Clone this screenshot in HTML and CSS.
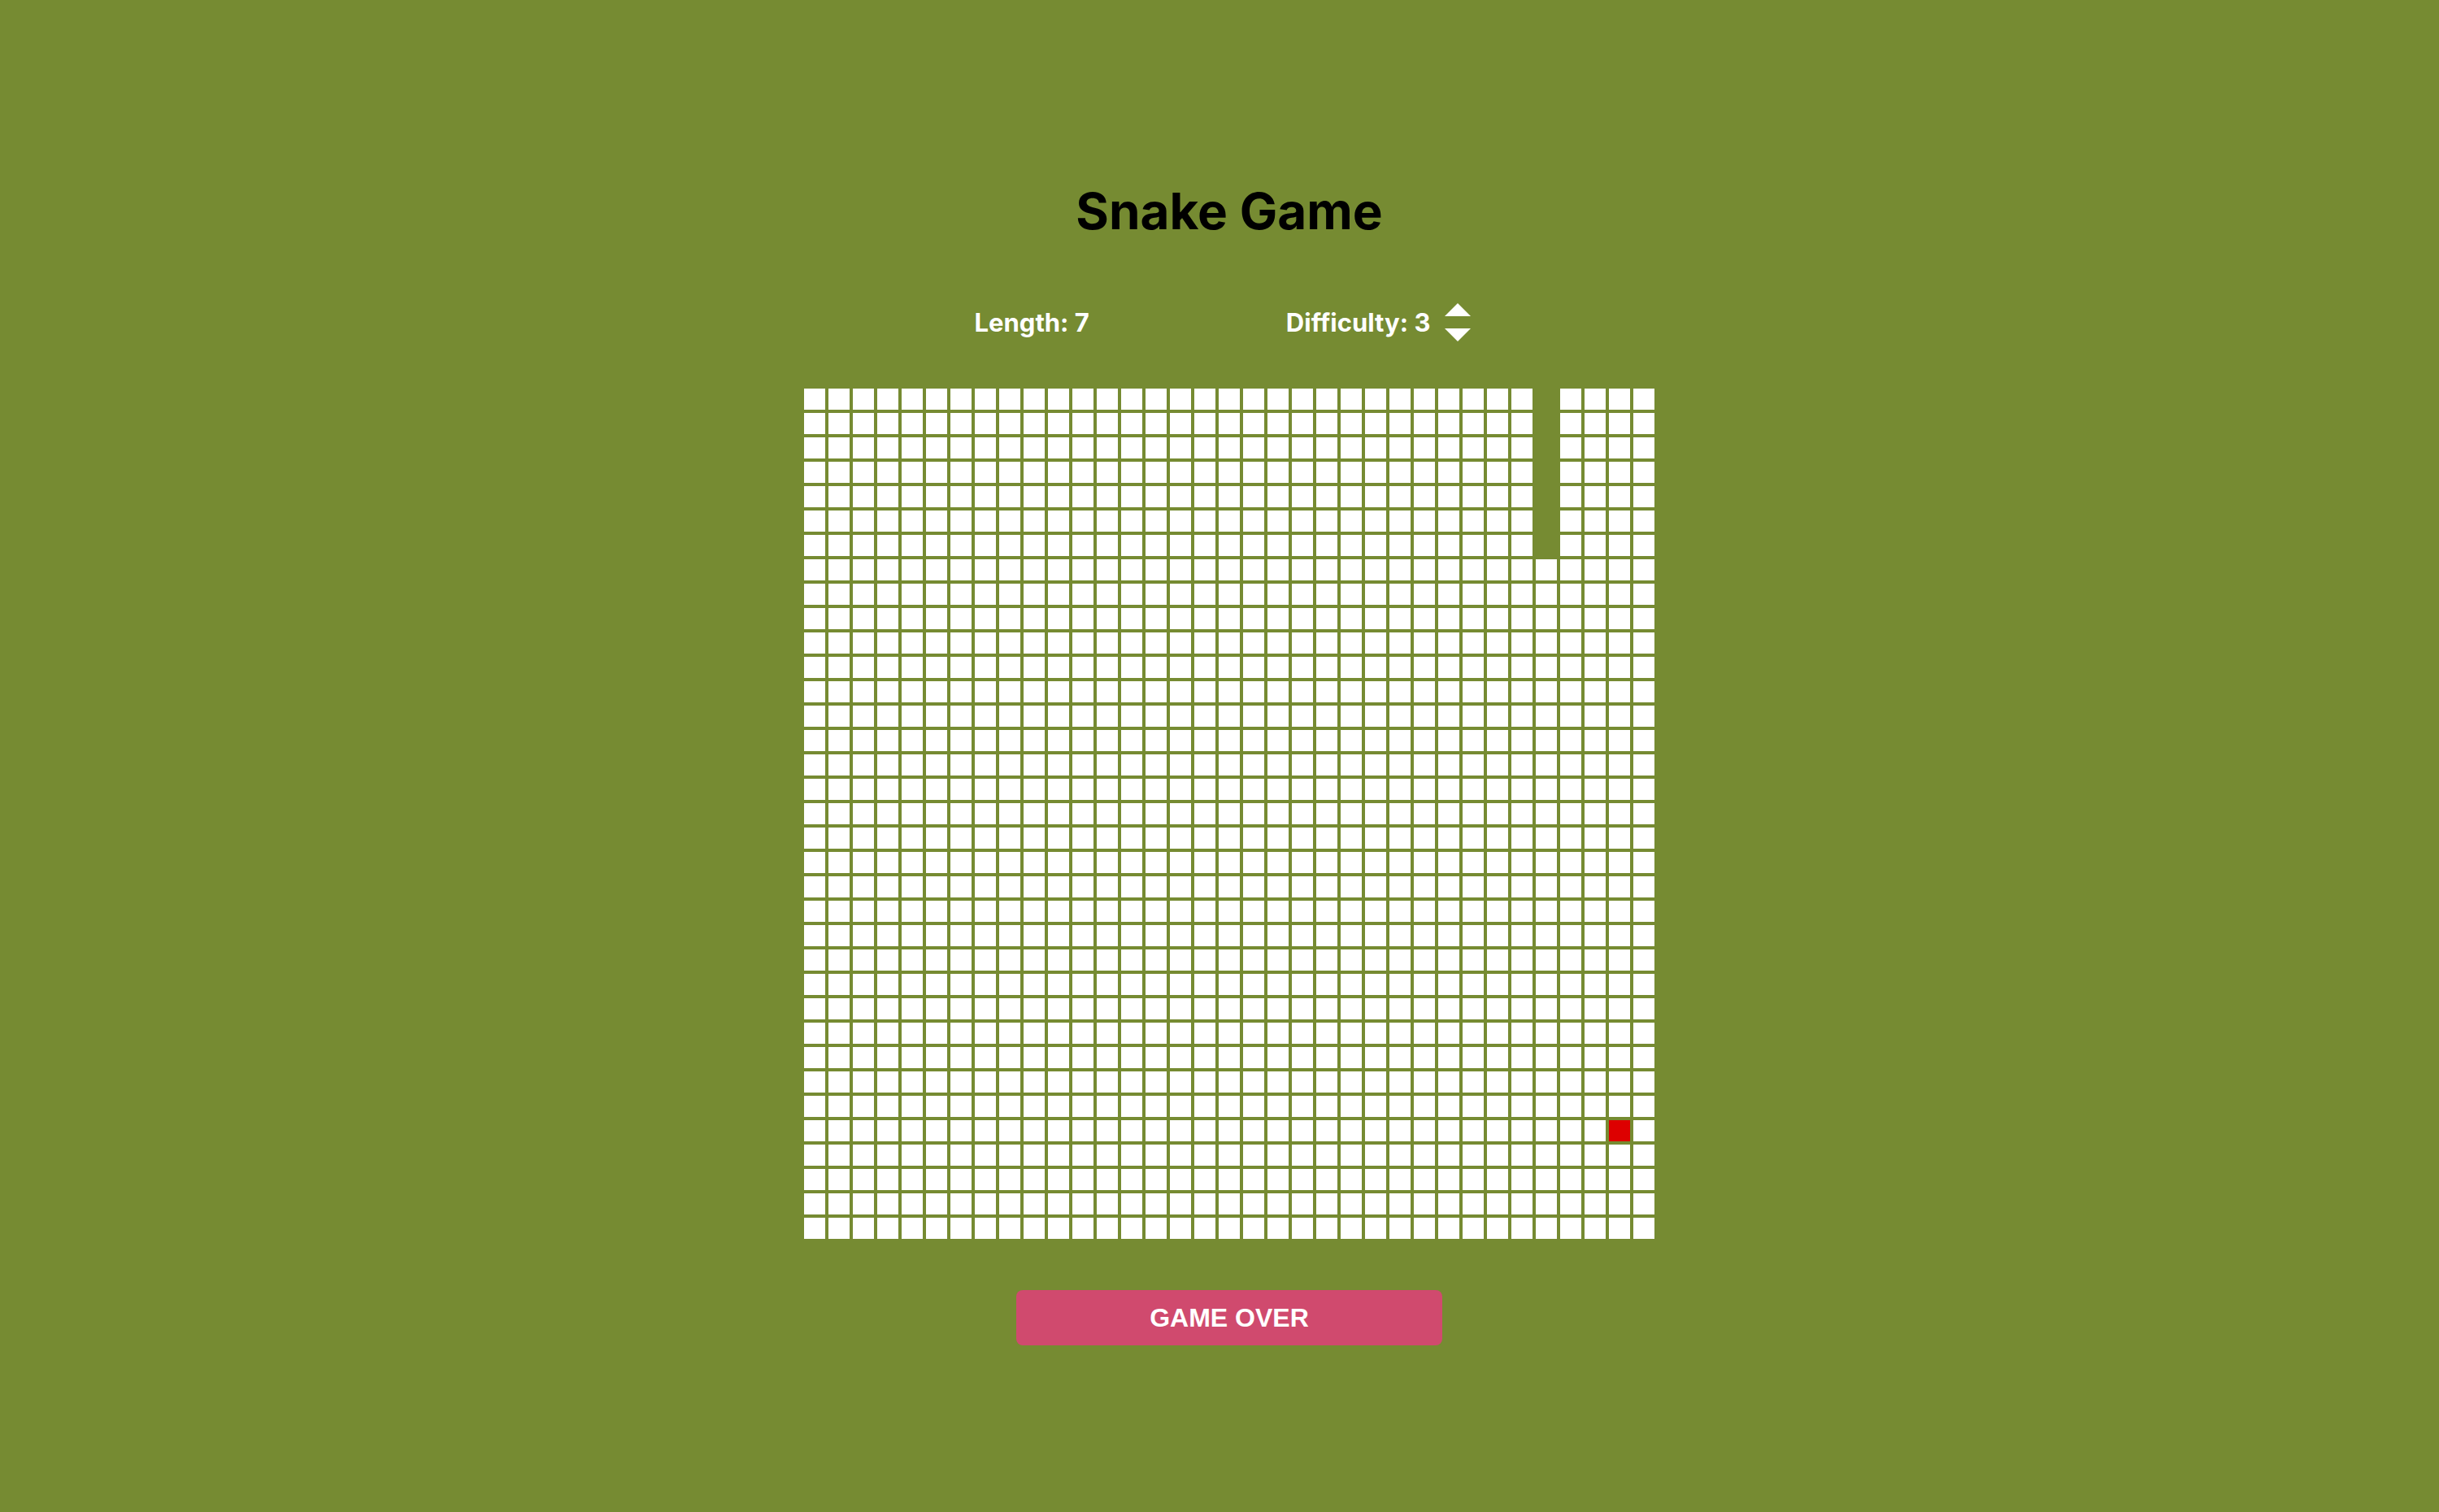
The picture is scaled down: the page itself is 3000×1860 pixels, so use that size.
FILE: index.html
```html
<!DOCTYPE html>
<html lang="en">
<head>
<meta charset="utf-8">
<title>Snake Game</title>
<link rel="stylesheet" href="styles.css">
</head>
<body>
<main class="app">
  <h1 class="title">Snake Game</h1>
  <div class="stats">
    <div class="stat">Length: 7</div>
    <div class="stat stat-difficulty">
      <span>Difficulty: 3</span>
      <div class="stepper">
        <button class="arrow arrow-up" aria-label="Increase difficulty"></button>
        <button class="arrow arrow-down" aria-label="Decrease difficulty"></button>
      </div>
    </div>
  </div>
  <div class="board" id="board"></div>
  <button class="status-btn">GAME OVER</button>
</main>
<script src="script.js"></script>
</body>
</html>
```

FILE: styles.css
```css
html, body {
  margin: 0;
  padding: 0;
}
body {
  background: #768b32;
  font-family: Inter, "Liberation Sans", sans-serif;
  width: 3000px;
  height: 1860px;
  overflow: hidden;
}
.app {
  margin-left: 24px;
  padding-top: 229px;
  display: flex;
  flex-direction: column;
  align-items: center;
}
.title {
  margin: 0;
  font-size: 62px;
  line-height: 1;
  font-weight: 700;
  color: #000;
}
.stats {
  margin-top: 82px;
  display: flex;
  align-items: center;
  gap: 242px;
  padding-right: 16px;
  height: 47px;
}
.stat {
  color: #fff;
  font-size: 31px;
  font-weight: 700;
  line-height: 1;
}
.stat-difficulty {
  display: flex;
  align-items: center;
  gap: 18px;
}
.stepper {
  display: flex;
  flex-direction: column;
  gap: 15px;
}
.arrow {
  width: 0;
  height: 0;
  padding: 0;
  margin: 0;
  background: none;
  border-left: 16px solid transparent;
  border-right: 16px solid transparent;
  cursor: pointer;
}
.arrow-up {
  border-top: 0;
  border-bottom: 16px solid #fff;
}
.arrow-down {
  border-bottom: 0;
  border-top: 16px solid #fff;
}
.board {
  margin-top: 58px;
  display: grid;
  grid-template-columns: repeat(35, 26px);
  grid-auto-rows: 26px;
  gap: 4px;
}
.cell {
  background: #fff;
}
.cell.snake {
  background: #768b32;
}
.cell.food {
  background: #dd0000;
}
.status-btn {
  margin-top: 63px;
  width: 524px;
  height: 68px;
  border: 0;
  border-radius: 8px;
  background: #d04a6e;
  color: #fff;
  font-family: "Liberation Sans", Arial, sans-serif;
  font-weight: 700;
  font-size: 32px;
  display: flex;
  align-items: center;
  justify-content: center;
}
```

FILE: script.js
```js
(function () {
  var size = 35;
  var snake = [];
  for (var r = 0; r < 7; r++) snake.push(r + ',30');
  var food = '30,33';
  var board = document.getElementById('board');
  var frag = document.createDocumentFragment();
  for (var y = 0; y < size; y++) {
    for (var x = 0; x < size; x++) {
      var cell = document.createElement('div');
      var key = y + ',' + x;
      cell.className = 'cell' + (snake.indexOf(key) !== -1 ? ' snake' : '') + (key === food ? ' food' : '');
      frag.appendChild(cell);
    }
  }
  board.appendChild(frag);
})();
```
